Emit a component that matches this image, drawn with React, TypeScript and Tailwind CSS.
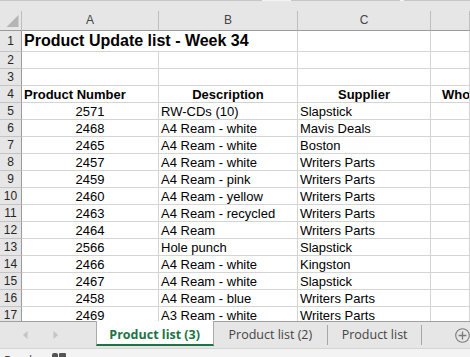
import React from "react"

const rows = [
  { n: 5, num: "2571", desc: "RW-CDs (10)", sup: "Slapstick" },
  { n: 6, num: "2468", desc: "A4 Ream - white", sup: "Mavis Deals" },
  { n: 7, num: "2465", desc: "A4 Ream - white", sup: "Boston" },
  { n: 8, num: "2457", desc: "A4 Ream - white", sup: "Writers Parts" },
  { n: 9, num: "2459", desc: "A4 Ream - pink", sup: "Writers Parts" },
  { n: 10, num: "2460", desc: "A4 Ream - yellow", sup: "Writers Parts" },
  { n: 11, num: "2463", desc: "A4 Ream - recycled", sup: "Writers Parts" },
  { n: 12, num: "2464", desc: "A4 Ream", sup: "Writers Parts" },
  { n: 13, num: "2566", desc: "Hole punch", sup: "Slapstick" },
  { n: 14, num: "2466", desc: "A4 Ream - white", sup: "Kingston" },
  { n: 15, num: "2467", desc: "A4 Ream - white", sup: "Slapstick" },
  { n: 16, num: "2458", desc: "A4 Ream - blue", sup: "Writers Parts" },
  { n: 17, num: "2469", desc: "A3 Ream - white", sup: "Writers Parts" },
]

const gridCols = "grid grid-cols-[22px_137px_139px_133px_1fr]"
const cell = "h-[17px] border-r border-b border-[#d4d4d4] leading-[17px] whitespace-nowrap"
const rowHead =
  "h-[17px] bg-[#e6e6e6] border-r border-r-[#9b9b9b] border-b border-b-[#c4c4c4] text-center text-[12px] leading-[17px] text-[#262626]"

function Row({ n, children }: { n: number; children?: React.ReactNode }) {
  return (
    <div className={gridCols}>
      <div className={rowHead}>{n}</div>
      {children ?? (
        <>
          <div className={cell} />
          <div className={cell} />
          <div className={cell} />
          <div className={cell} />
        </>
      )}
    </div>
  )
}

export default function App() {
  return (
    <div className="h-[357px] w-[470px] overflow-hidden bg-white font-['Liberation_Sans',Arial,sans-serif] text-[13px] text-black">
      {/* sheet */}
      <div className="h-[321px] overflow-hidden">
        {/* strip above column headers */}
        <div className="flex h-px">
          <div className="w-[262px] bg-[#c6c6c6]" />
          <div className="w-[29px] bg-[#f3f3f3]" />
          <div className="w-[109px] bg-[#c6c6c6]" />
          <div className="w-[4px] bg-[#f3f3f3]" />
          <div className="flex-1 bg-[#c6c6c6]" />
        </div>
        <div className="h-[10px] bg-[#e6e6e6]" />

        {/* column headers */}
        <div className={`${gridCols} bg-[#e6e6e6] text-[12px] text-[#444] leading-[19px]`}>
          <div className="relative h-[20px] border-r border-r-[#bdbdbd] border-b border-b-[#9b9b9b]">
            <svg className="absolute left-[6px] top-[4px]" width="13" height="12" viewBox="0 0 13 12">
              <polygon points="12.5,0 12.5,12 0.5,12" fill="#b5b5b5" />
            </svg>
          </div>
          {["A", "B", "C", ""].map((c, i) => (
            <div key={i} className="h-[20px] border-r border-r-[#bdbdbd] border-b border-b-[#9b9b9b] text-center">
              {c}
            </div>
          ))}
        </div>

        {/* row 1 title */}
        <div className={gridCols}>
          <div className="h-[21px] bg-[#e6e6e6] border-r border-r-[#9b9b9b] border-b border-b-[#c4c4c4] text-center text-[12px] leading-[20px] text-[#262626]">
            1
          </div>
          <div className="col-span-2 h-[21px] border-r border-b border-[#d4d4d4] pl-[2px] text-[16px] font-bold leading-[20px] whitespace-nowrap">
            Product Update list - Week 34
          </div>
          <div className="h-[21px] border-r border-b border-[#d4d4d4]" />
          <div className="h-[21px] border-r border-b border-[#d4d4d4]" />
        </div>

        <Row n={2} />
        <Row n={3} />

        <Row n={4}>
          <div className={`${cell} pl-[2px] font-bold`}>Product Number</div>
          <div className={`${cell} text-center font-bold`}>Description</div>
          <div className={`${cell} text-center font-bold`}>Supplier</div>
          <div className={`${cell} overflow-hidden pl-[11px] font-bold`}>Wholesale Price</div>
        </Row>

        {rows.map((r) => (
          <Row key={r.n} n={r.n}>
            <div className={`${cell} text-center`}>{r.num}</div>
            <div className={`${cell} pl-[2px]`}>{r.desc}</div>
            <div className={`${cell} pl-[2px]`}>{r.sup}</div>
            <div className={cell} />
          </Row>
        ))}
      </div>

      {/* sheet tabs */}
      <div className="flex h-[27px] items-start border-t border-[#9f9f9f] bg-[#e6e6e6] font-['Open_Sans',sans-serif] text-[12.5px] leading-[16px]">
        <div className="flex h-[25px] w-[96px] items-center gap-[25px] pl-[23px]">
          <svg width="5" height="8" viewBox="0 0 5 8">
            <polygon points="4.5,0 4.5,8 0,4" fill="#c4c4c4" />
          </svg>
          <svg width="5" height="8" viewBox="0 0 5 8">
            <polygon points="0.5,0 0.5,8 5,4" fill="#c4c4c4" />
          </svg>
        </div>
        <div className="-mt-px h-[25px] w-[118px] border-x border-[#ababab] border-b-2 border-b-[#217346] bg-white pt-[6px] text-center text-[12.5px] font-bold text-[#217346]">
          Product list (3)
        </div>
        <div className="w-[114px] pt-[5px] text-center text-[#444]">Product list (2)</div>
        <div className="mt-[3px] h-[20px] w-px bg-[#a6a6a6]" />
        <div className="w-[93px] pt-[5px] text-center text-[#444]">Product list</div>
        <div className="mt-[3px] h-[20px] w-px bg-[#a6a6a6]" />
        <div className="ml-[33px] mt-[6px]">
          <svg width="15" height="15" viewBox="0 0 15 15">
            <circle cx="7.5" cy="7.5" r="6.8" fill="none" stroke="#7a7a7a" strokeWidth="1.1" />
            <path d="M7.5 3.6v7.8M3.6 7.5h7.8" stroke="#7a7a7a" strokeWidth="1.3" />
          </svg>
        </div>
      </div>

      {/* status bar */}
      <div className="flex h-[10px] items-start overflow-hidden border-t border-[#d4d4d4] bg-[#f3f3f3] pt-[4px] font-['Open_Sans',sans-serif] text-[12px] leading-[16px] text-[#444]">
        <span className="pl-[4px]">Ready</span>
        <svg className="ml-[14px] -mt-px" width="14" height="8" viewBox="0 0 14 8">
          <rect x="0" y="1" width="6" height="7" rx="2" fill="#555" />
          <rect x="7" y="1" width="7" height="7" rx="1" fill="#555" />
        </svg>
      </div>
    </div>
  )
}
